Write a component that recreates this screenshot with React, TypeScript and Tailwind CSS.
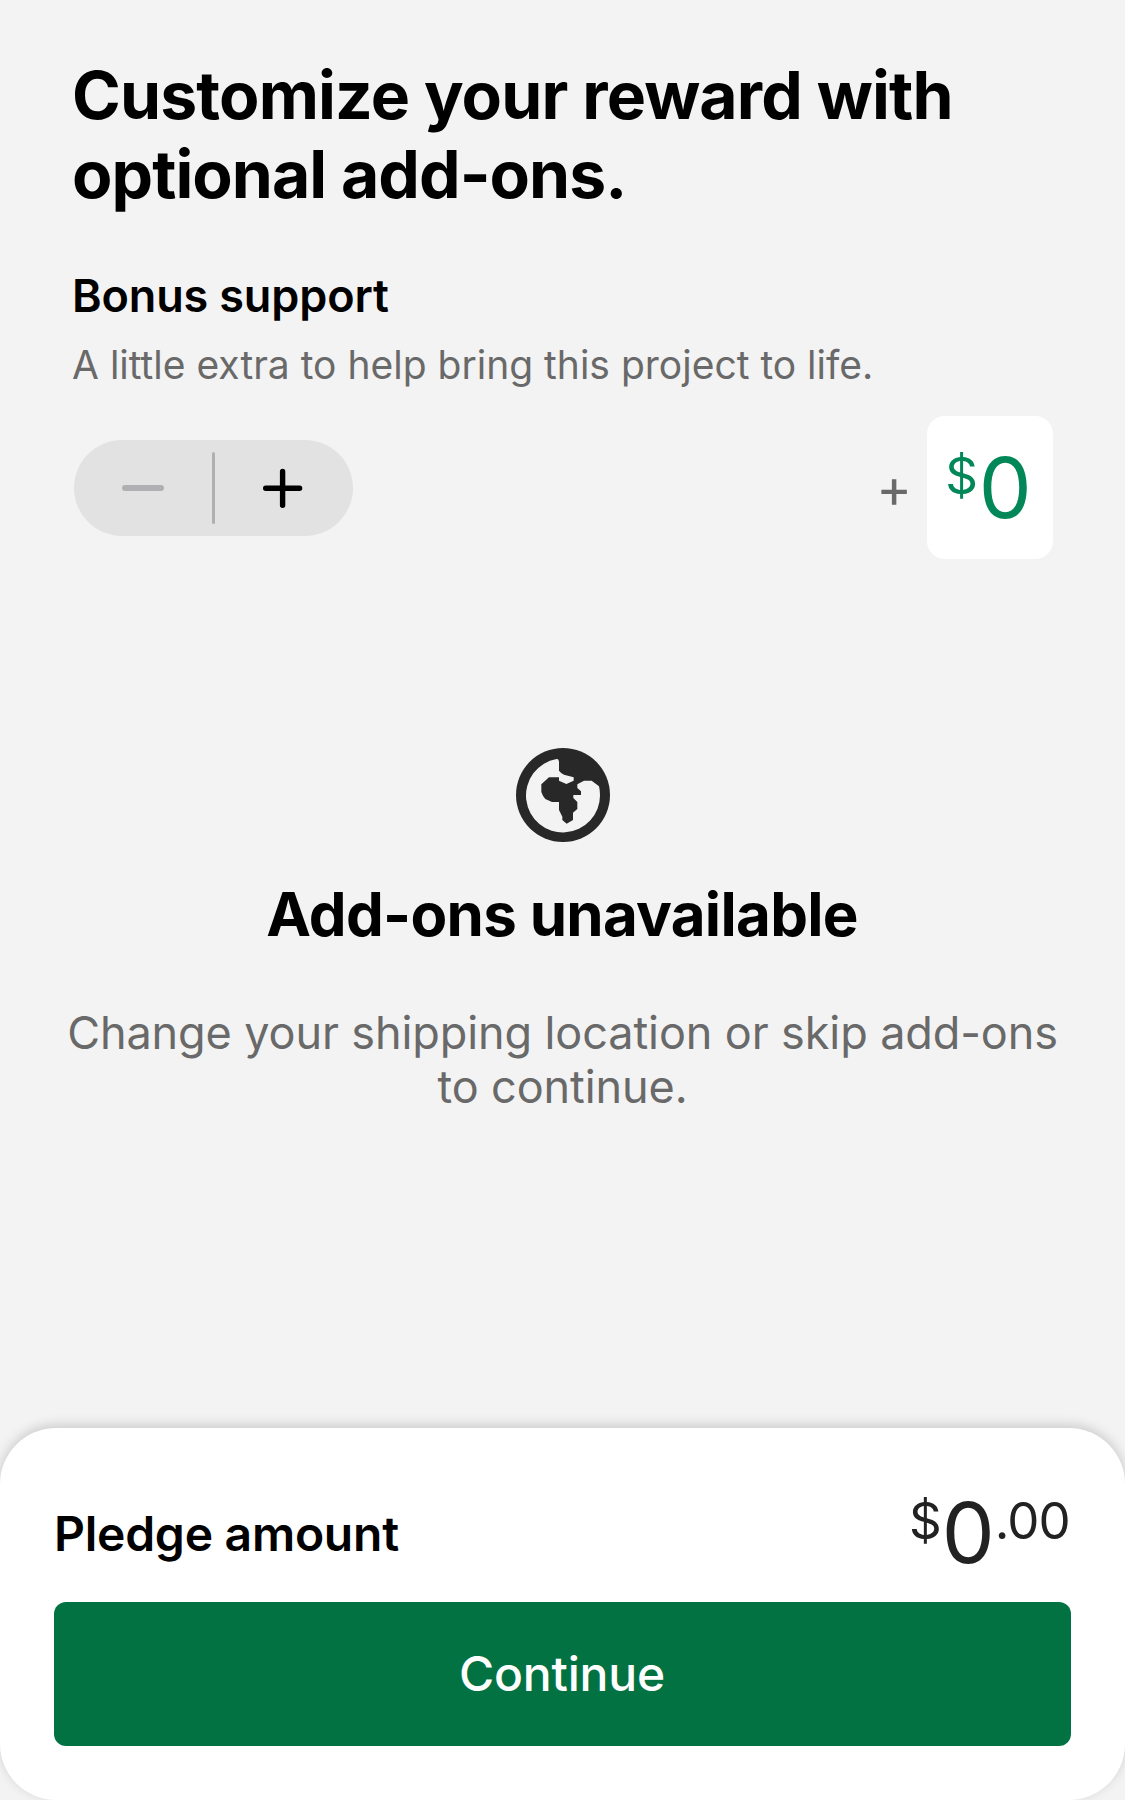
import React from "react";

function Stepper() {
  return (
    <div className="flex h-[96px] w-[279px] items-center rounded-full bg-[#e2e2e2]">
      <div className="flex w-[138px] justify-center">
        <svg width="44" height="44" viewBox="0 0 44 44" fill="none" stroke="#b0b0b2" strokeWidth="6" strokeLinecap="round">
          <path d="M4 22H40" />
        </svg>
      </div>
      <div className="h-[72px] w-[3px] rounded-full bg-[#b0b0b2]" />
      <div className="flex w-[138px] justify-center">
        <svg width="44" height="44" viewBox="0 0 44 44" fill="none" stroke="#000" strokeWidth="5.4" strokeLinecap="round">
          <path d="M3.7 22.3H37.6M20.6 5.5V39.2" />
        </svg>
      </div>
    </div>
  );
}

function GlobeIcon() {
  return (
    <svg width="94" height="94" viewBox="78 54 282 282">
      <circle cx="219" cy="195" r="141" fill="#282828" />
      <path
        fill="#f3f3f3"
        d="M200 87Q206 85 207 95V122Q213 130 222 134L251 142V152L229 162L207 152V142H177L154 163V186Q158 198 166 207L186 216H207V240L217 260V270L230 281L249 270V248L262 237V216L250 204V195H273V184L262 174V163L282 152H305L327 169Q330 181 330 195A111 111 0 1 1 200 87Z"
      />
    </svg>
  );
}

export default function App() {
  return (
    <div className="flex h-[1800px] w-[1125px] flex-col overflow-hidden bg-[#f3f3f3] font-['Inter',sans-serif] text-black">
      <header className="px-[72px] pt-[56px]">
        <h1 className="text-[66px] leading-[79px] font-bold whitespace-nowrap">
          <span className="block tracking-[-0.85px]">Customize your reward with</span>
          <span className="block tracking-[-0.95px]">optional add-ons.</span>
        </h1>
        <h2 className="mt-[55px] text-[45px] leading-[54px] font-semibold tracking-[-0.15px]">Bonus support</h2>
        <p className="mt-[18px] text-[39px] leading-[48px] whitespace-nowrap text-[#696969]">
          A little extra to help bring this project to life.
        </p>
      </header>
      <div className="mt-[27px] flex h-[143px] items-center justify-between pr-[72px] pl-[74px]">
        <Stepper />
        <div className="flex items-center">
          <span className="mt-[1px] mr-[15px] text-[54px] leading-[60px] text-[#696969]">+</span>
          <div className="flex h-[143px] w-[126px] justify-center rounded-[18px] bg-white pr-[3px] text-[#028858]">
            <span className="mt-[29px] mr-[1px] text-[51px] leading-[62px]">$</span>
            <span className="mt-[24px] text-[84px] leading-[96px]">0</span>
          </div>
        </div>
      </div>
      <section className="mt-[189px] flex flex-col items-center text-center">
        <GlobeIcon />
        <h2 className="mt-[36px] pr-[1px] text-[60px] leading-[72px] font-bold tracking-[-0.7px]">Add-ons unavailable</h2>
        <p className="mt-[56px] text-[45px] leading-[54px] tracking-[-0.1px] whitespace-nowrap text-[#696969]">
          Change your shipping location or skip add-ons
          <br />
          to continue.
        </p>
      </section>
      <footer className="mt-auto h-[372px] rounded-[56px] bg-white px-[54px] pt-[60px] shadow-[0_-3px_12px_rgba(0,0,0,0.17)]">
        <div className="flex h-[114px] justify-between">
          <span className="mt-[17px] text-[48px] leading-[58px] font-semibold tracking-[-0.25px]">Pledge amount</span>
          <div className="flex pr-[1px] text-[#222222]">
            <span className="mt-[2px] text-[51px] leading-[62px]">$</span>
            <span className="-mt-[3px] text-[84px] leading-[96px]">0</span>
            <span className="mt-[2px] text-[51px] leading-[62px] tracking-[-0.8px]">.00</span>
          </div>
        </div>
        <button className="h-[144px] w-full rounded-[12px] bg-[#037242] pr-[1px] text-[48px] font-medium tracking-[-0.2px] text-white">Continue</button>
      </footer>
    </div>
  );
}
